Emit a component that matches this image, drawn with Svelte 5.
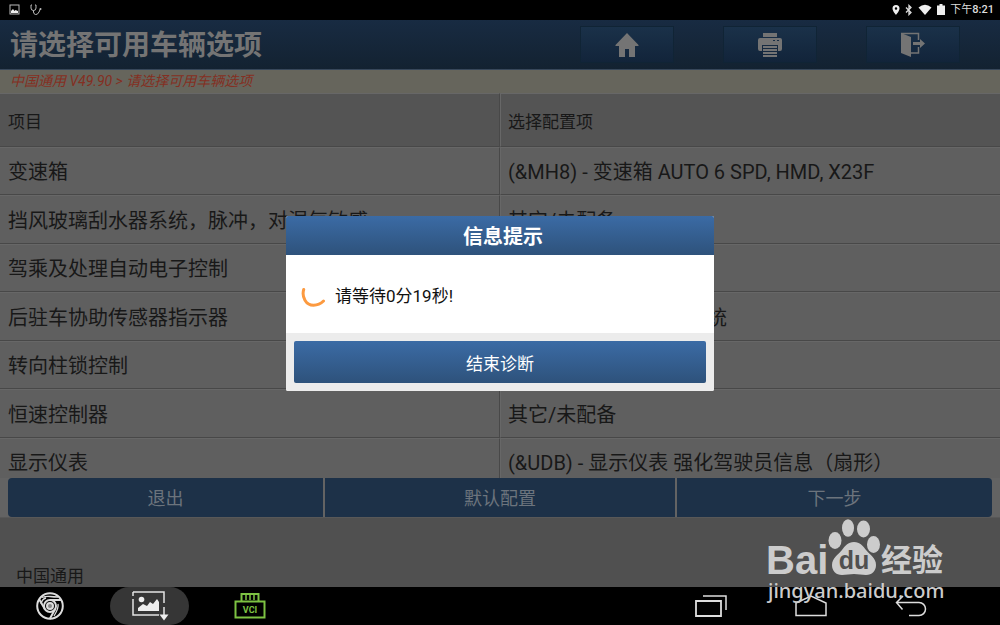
<script lang="ts">
	interface Row {
		item: string;
		option: string;
	}

	const rows: Row[] = [
		{ item: "变速箱", option: "(&MH8) - 变速箱 AUTO 6 SPD, HMD, X23F" },
		{ item: "挡风玻璃刮水器系统，脉冲，对湿气敏感", option: "其它/未配备" },
		{ item: "驾乘及处理自动电子控制", option: "其它/未配备" },
		{ item: "后驻车协助传感器指示器", option: "(&UD7) - 后驻车辅助系统" },
		{ item: "转向柱锁控制", option: "其它/未配备" },
		{ item: "恒速控制器", option: "其它/未配备" },
		{ item: "显示仪表", option: "(&UDB) - 显示仪表 强化驾驶员信息（扇形）" },
	];

	let minutes = $state(0);
	let seconds = $state(19);
	let open = $state(true);
</script>

<div class="screen">
	<div class="status">
		<svg width="12" height="12" viewBox="0 0 12 12">
			<rect x="1" y="1" width="9" height="9" fill="none" stroke="#bbb" />
			<path d="M2 9V7l2-2 1.500 2 1-1L9 7v2z" fill="#eee" />
		</svg>
		<svg class="steth" width="12" height="12" viewBox="0 0 12 12" fill="none" stroke="#bbb">
			<path d="M2 1H1v3q0 2.500 2.500 2.500T6 4V1H5M3.500 6.500V8q0 2 2 2.500T9 8t1-3" />
			<circle cx="10.500" cy="5" r="1" fill="#bbb" stroke="none" />
		</svg>
		<div class="right">
			<svg width="8" height="12" viewBox="0 0 8 12">
				<path
					d="M4 1a3.500 3.500 0 0 0-3.500 3.500C.5 7 4 11 4 11s3.500-4 3.500-6.500A3.500 3.500 0 0 0 4 1zm0 2.200a1.200 1.200 0 1 1 0 2.500 1.200 1.200 0 0 1 0-2.500z"
					fill="#eee"
				/>
			</svg>
			<svg width="8" height="12" viewBox="0 0 8 12" fill="none" stroke="#ddd" stroke-width="1.300">
				<path d="M1 3.500l5 5L4 10.500v-9L6 3.500l-5 5" />
			</svg>
			<svg width="14" height="12" viewBox="0 0 14 12">
				<path d="M.5 3.500Q7-2 13.500 3.500L7 11z" fill="#eee" />
			</svg>
			<svg width="8" height="12" viewBox="0 0 8 12">
				<path d="M0 1.500h2.500V0h3v1.500H8V11H0z" fill="#eee" />
			</svg>
			<span class="clock">下午<b>8:21</b></span>
		</div>
	</div>

	<main>
		<header>
			<h1>请选择可用车辆选项</h1>
			<div class="tools">
				<button aria-label="主页">
					<svg width="24" height="24" viewBox="0 0 24 24" fill="#747474">
						<path d="M12 0l11.500 12v1H20v11h-6v-8h-4v8H4V13H.5v-1z" />
					</svg>
				</button>
				<button aria-label="打印">
					<svg width="24" height="24" viewBox="0 0 24 24" fill="#747474">
						<path d="M5 0h14v4H5z" />
						<path
							d="M2 5h20q2 0 2 2v9q0 2-2 2h-2v-6H4v6H2q-2 0-2-2V7q0-2 2-2zm13 2v1h2V7zm4 0v1h2V7z"
							fill-rule="evenodd"
						/>
						<path d="M5 13h14v2H5zM5 16h14v2H5zM5 19h14v2H5zM5 22h14v2H5z" />
					</svg>
				</button>
				<button aria-label="退出登录">
					<svg width="26" height="26" viewBox="0 0 26 26">
						<path d="M1 1l10 4v20L1 21z" fill="#747474" />
						<path
							d="M1 1.500h17.500V8M18.500 15v6H11"
							fill="none"
							stroke="#747474"
							stroke-width="1.500"
						/>
						<path d="M13 10h7V7l5 4.500-5 4.500v-3h-7z" fill="#747474" />
					</svg>
				</button>
			</div>
		</header>

		<p class="crumb">中国通用 V49.90 &gt; 请选择可用车辆选项</p>

		<div class="list">
			<table>
				<thead>
					<tr>
						<th>项目</th>
						<th>选择配置项</th>
					</tr>
				</thead>
				<tbody>
					{#each rows as row}
						<tr>
							<td>{row.item}</td>
							<td>{row.option}</td>
						</tr>
					{/each}
				</tbody>
			</table>
		</div>

		<div class="actions">
			<button>退出</button>
			<button class="wide">默认配置</button>
			<button>下一步</button>
		</div>

		<div class="vehicle">中国通用</div>

		{#if open}
			<div class="overlay">
				<div class="dialog" role="dialog" aria-labelledby="dialog-title">
					<h2 id="dialog-title">信息提示</h2>
					<div class="message">
						<svg width="26" height="26" viewBox="0 0 26 26">
							<path
								d="M2.700 8.500C.5 16 5 24.200 12.500 24.200c4 0 7.500-1.700 10-4.200"
								fill="none"
								stroke="#fc9a40"
								stroke-width="3"
								stroke-linecap="round"
							/>
						</svg>
						<span>请等待{minutes}分{seconds}秒!</span>
					</div>
					<div class="foot">
						<button onclick={() => (open = false)}>结束诊断</button>
					</div>
				</div>
			</div>
		{/if}
	</main>

	<nav>
		<button aria-label="浏览器">
			<svg width="28" height="28" viewBox="0 0 28 28" fill="none" stroke="#ddd" stroke-width="2">
				<circle cx="14" cy="14" r="12.800" />
				<circle cx="14" cy="14" r="6" />
				<circle cx="14" cy="14" r="3" fill="#888" />
				<path d="M14 8h11.500M8.800 17L3 7M19.200 17l-5.500 10" />
				<path d="M6 5.500Q10 4 14 4.500T22 5M5 12q1-5 5-6M22 12q1 4-4 12" stroke-width="1.300" />
			</svg>
		</button>
		<button class="active" aria-label="截图">
			<svg width="38" height="30" viewBox="0 0 38 30">
				<path
					d="M2 1h31v11M33 16v8M28 24H2V8M2 5V1"
					fill="none"
					stroke="#e4e4e4"
					stroke-width="1.500"
				/>
				<circle cx="10.500" cy="8.500" r="2.800" fill="#eee" />
				<path d="M7 20v-3l5-4 4 2 3-4 3 2 4-5 2 3v9z" fill="#eee" />
				<path d="M28.500 23.500h9L33 29.500z" fill="#eee" />
			</svg>
		</button>
		<button aria-label="VCI">
			<svg width="32" height="28" viewBox="0 0 32 28">
				<path
					d="M7.500 9V2h17v7M1.500 9.500h29v16h-29z"
					fill="none"
					stroke="#7dc242"
					stroke-width="2"
				/>
				<path d="M12 3v5M16 3v5M20 3v5" stroke="#7dc242" stroke-width="1.500" />
				<text x="16" y="21" text-anchor="middle" class="vci">VCI</text>
			</svg>
		</button>
		<div class="system">
			<button aria-label="最近任务">
				<svg width="34" height="24" viewBox="0 0 34 24" fill="none" stroke="#ddd">
					<path d="M2 7h25v15H2z" stroke-width="1.800" />
					<path d="M9 2h23v14" stroke-width="1.500" />
				</svg>
			</button>
			<button aria-label="主屏幕">
				<svg width="34" height="24" viewBox="0 0 34 24" fill="none" stroke="#ddd">
					<path d="M2 21.500V9l15-7 15 7v12.500z" stroke-width="1.500" />
				</svg>
			</button>
			<button aria-label="返回">
				<svg width="34" height="24" viewBox="0 0 34 24" fill="none" stroke="#ddd">
					<path d="M9 2L2.500 8.500l6 7M2.500 8.500H25a6.500 6.500 0 0 1 0 13H15" stroke-width="1.500" />
				</svg>
			</button>
		</div>
	</nav>

	<svg class="watermark" width="190" height="90" viewBox="0 0 190 90" fill="#ccc">
		<text x="6" y="56" class="bai">Bai</text>
		<ellipse cx="75" cy="22.500" rx="6.500" ry="8.500" />
		<ellipse cx="88" cy="10" rx="6" ry="8.800" />
		<ellipse cx="103.500" cy="11" rx="6.500" ry="8.500" />
		<ellipse cx="113.500" cy="26.500" rx="6.500" ry="8.500" />
		<path
			d="M94 24c6 0 9 4 12 8 4 5 10 8 10 15 0 6-4 10-10 10-4 0-8-1-12-1s-8 1-12 1c-6 0-10-4-10-10 0-7 6-10 10-15 3-4 6-8 12-8z"
		/>
		<text x="94" y="51" text-anchor="middle" class="du">du</text>
		<text x="121" y="53" class="exp">经验</text>
		<text x="8" y="80" class="site">jingyan.baidu.com</text>
	</svg>
</div>

<style>
	:global(body) {
		margin: 0;
		background: #000;
	}
	.screen {
		position: relative;
		display: flex;
		flex-direction: column;
		min-height: 100vh;
		overflow: hidden;
		font-family: Roboto, "Noto Sans CJK SC", sans-serif;
		color: #181818;
	}
	button {
		border: 0;
		padding: 0;
		background: none;
		font-family: inherit;
	}
	svg {
		display: block;
	}

	.status {
		display: flex;
		align-items: center;
		height: 20px;
		padding: 0 6px 0 9px;
		background: #000;
		color: #ddd;
	}
	.steth {
		margin-left: 9px;
	}
	.right {
		display: flex;
		align-items: center;
		gap: 5px;
		margin-left: auto;
	}
	.clock {
		font-size: 11px;
		line-height: 20px;
	}
	.clock b {
		font-weight: 500;
	}

	main {
		position: relative;
		flex: 1;
		display: flex;
		flex-direction: column;
		background: #505050;
	}
	header {
		display: flex;
		align-items: center;
		justify-content: space-between;
		height: 49px;
		padding: 0 40px 0 10px;
		border-bottom: 1px solid #37475a;
		background: linear-gradient(#182b42, #132231);
	}
	h1 {
		margin: 0;
		padding-top: 2px;
		font-size: 28px;
		line-height: 46px;
		font-weight: 700;
		color: #747474;
	}
	.tools {
		display: flex;
		gap: 49px;
	}
	.tools button {
		display: flex;
		align-items: center;
		justify-content: center;
		width: 94px;
		height: 37px;
		border: 1px solid #102435;
		background: linear-gradient(#1a3149, #12243a);
	}

	.crumb {
		margin: 0;
		padding-left: 10px;
		font-size: 14px;
		line-height: 22px;
		height: 23px;
		font-style: italic;
		color: #842f22;
		background: #66655c;
	}

	.list {
		height: 385px;
		overflow: hidden;
	}
	table {
		width: 100%;
		table-layout: fixed;
		border-collapse: separate;
		border-spacing: 0;
	}
	th,
	td {
		box-sizing: border-box;
		padding: 0 8px;
		text-align: left;
		white-space: nowrap;
		border-top: 1px solid #676767;
		border-bottom: 1px solid #484848;
	}
	th:first-child,
	td:first-child {
		border-right: 1px solid #484848;
	}
	th:last-child,
	td:last-child {
		padding-left: 7px;
		border-left: 1px solid #676767;
	}
	th {
		height: 54px;
		font-size: 17px;
		font-weight: 400;
		background: #545454;
	}
	td {
		height: 48px;
		padding-top: 2px;
		font-size: 20px;
		line-height: 44px;
		background: #5f5f5f;
	}
	tr:nth-child(even) td {
		height: 49px;
	}

	.actions {
		display: flex;
		gap: 2px;
		padding: 0 8px;
		background: #636363;
	}
	.actions button {
		flex: 9;
		height: 39px;
		padding-bottom: 2px;
		font-size: 18px;
		color: #6c747d;
		background: #1d3148;
	}
	.actions .wide {
		flex: 10;
	}
	.actions button:first-child {
		border-radius: 4px 0 0 4px;
	}
	.actions button:last-child {
		border-radius: 0 4px 4px 0;
	}

	.vehicle {
		flex: 1;
		display: flex;
		align-items: flex-end;
		padding-left: 16px;
		font-size: 17px;
		line-height: 22px;
		border-top: 1px solid #585858;
	}

	.overlay {
		position: absolute;
		inset: 0;
		display: flex;
		align-items: center;
		justify-content: center;
	}
	.dialog {
		width: 428px;
		border-radius: 2px;
		overflow: hidden;
		background: #fff;
	}
	h2 {
		margin: 0;
		padding: 3px 0 0 6px;
		font-size: 20px;
		line-height: 36px;
		font-weight: 700;
		text-align: center;
		color: #fff;
		background: linear-gradient(#3b6ba5, #2e527b);
	}
	.message {
		display: flex;
		align-items: center;
		gap: 8px;
		height: 78px;
		padding-left: 15px;
		font-size: 17px;
		color: #111;
	}
	.foot {
		padding: 8px;
		background: #ececec;
	}
	.foot button {
		display: block;
		width: 100%;
		height: 42px;
		border-radius: 2px;
		font-size: 17px;
		color: #fff;
		background: linear-gradient(#3b6ba5, #2e527b);
	}

	nav {
		display: flex;
		align-items: center;
		height: 38px;
		padding-left: 10px;
		background: #000;
	}
	nav button {
		display: flex;
		align-items: center;
		justify-content: center;
		width: 79px;
		height: 38px;
		margin-right: 21px;
	}
	nav .active {
		border-radius: 19px;
		background: #363636;
	}
	.vci {
		font-size: 9px;
		font-weight: 700;
		fill: #7dc242;
	}
	.system {
		display: flex;
		margin-left: auto;
		padding-right: 29px;
	}

	.watermark {
		position: absolute;
		right: 50px;
		bottom: 17px;
		pointer-events: none;
	}
	.bai {
		font: 700 40px "Liberation Sans", sans-serif;
	}
	.du {
		font: 700 25px "Liberation Sans", sans-serif;
		fill: #505050;
	}
	.exp {
		font: 700 31px "Noto Sans CJK SC", sans-serif;
	}
	.site {
		font: 500 20px "Noto Sans", sans-serif;
	}
</style>
